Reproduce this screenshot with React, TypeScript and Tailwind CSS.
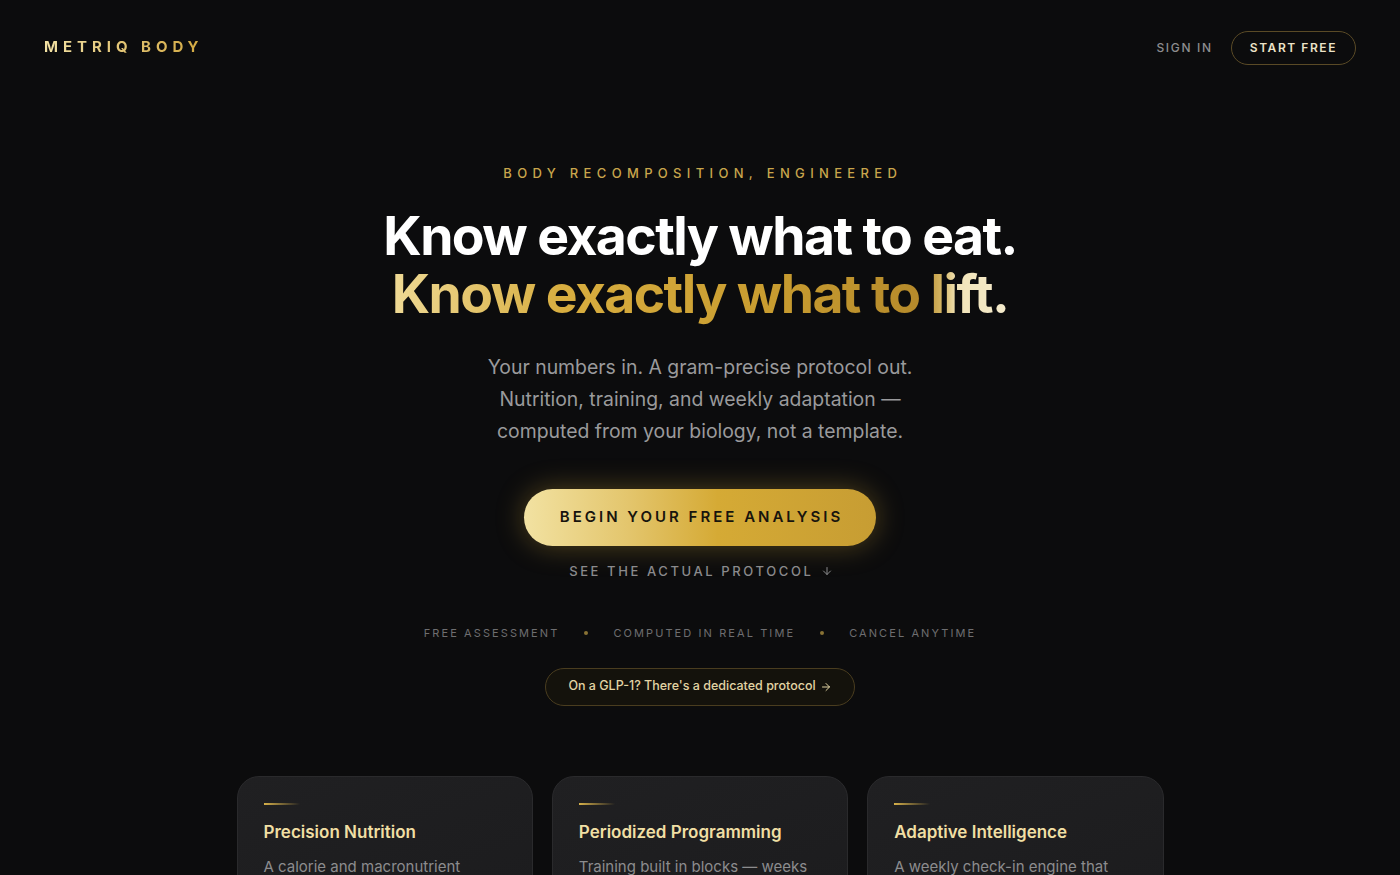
import { ArrowDown, ArrowRight } from 'lucide-react'

const features = [
  {
    title: 'Precision Nutrition',
    body: 'A calorie and macronutrient target set to the gram, built around your lean mass and goal.',
  },
  {
    title: 'Periodized Programming',
    body: 'Training built in blocks — weeks of progressive overload, then a planned deload.',
  },
  {
    title: 'Adaptive Intelligence',
    body: 'A weekly check-in engine that reads your trend and adjusts the protocol for you.',
  },
]

const trust = ['Free assessment', 'Computed in real time', 'Cancel anytime']

export default function App() {
  return (
    <div className="min-h-screen bg-[#0c0c0d] font-['Inter','Noto_Sans',sans-serif] text-white antialiased">
      {/* header */}
      <header className="flex h-[95px] items-center justify-between px-11">
        <span className="bg-gradient-to-r from-[#f3e2a4] to-[#d2a83e] bg-clip-text text-[15px] font-bold tracking-[0.33em] text-transparent">
          METRIQ BODY
        </span>
        <nav className="flex items-center gap-[18px]">
          <a className="text-[12px] font-medium tracking-[0.14em] text-[#8d8d8f]">SIGN IN</a>
          <a className="rounded-full border border-[#5a4a26] px-[18px] py-[7px] text-[12px] font-semibold tracking-[0.13em] text-[#ece3c8]">
            START FREE
          </a>
        </nav>
      </header>

      {/* hero */}
      <section className="flex flex-col items-center pt-[69px] text-center">
        <p className="pl-[0.42em] text-[13px] font-medium tracking-[0.41em] text-[#c9a64c]">
          BODY RECOMPOSITION, ENGINEERED
        </p>
        <h1 className="mt-[23px] text-[53.5px] font-bold leading-[58px] tracking-[-0.03em]">
          <span className="block text-white">Know exactly what to eat.</span>
          <span className="block bg-[linear-gradient(90deg,#f0dc9a_0%,#d8ae40_28%,#c99d30_60%,#b58a2b_85%,#d9bb6a_88.5%,#f2e4b8_90.5%,#f5ecd0_100%)] bg-clip-text pb-1 text-transparent">
            Know exactly what to lift.
          </span>
        </h1>
        <p className="mt-[24px] max-w-[440px] text-[19.4px] leading-[32px] text-[#9a9a9c]">
          Your numbers in. A gram-precise protocol out. Nutrition, training, and weekly adaptation — computed from your biology, not a template.
        </p>

        <button className="mt-[42px] h-[57px] w-[352px] rounded-full bg-[linear-gradient(90deg,#f2e2a2_0%,#e3c56c_30%,#d5aa35_55%,#c79d33_100%)] pl-[0.2em] text-[15px] font-semibold tracking-[0.2em] text-[#17140d] shadow-[0_0_28px_rgba(212,168,58,0.35)]">
          BEGIN YOUR FREE ANALYSIS
        </button>
        <a className="mt-[16px] flex items-center gap-2 pl-[0.2em] text-[13px] font-medium tracking-[0.2em] text-[#8a8a8c]">
          SEE THE ACTUAL PROTOCOL
          <ArrowDown className="h-3 w-3" strokeWidth={2} />
        </a>

        <div className="mt-[44px] flex items-center gap-[25px] text-[11px] tracking-[0.19em] text-[#6e6e70]">
          {trust.map((t, i) => (
            <div key={t} className="flex items-center gap-[25px]">
              {i > 0 && <span className="h-1 w-1 rounded-full bg-[#8a7334]" />}
              <span>{t.toUpperCase()}</span>
            </div>
          ))}
        </div>

        <a className="mt-[26px] flex h-[38px] items-center gap-1 rounded-full border border-[#4a3d1f] bg-[#14120c] px-[22px] text-[12.5px] font-medium text-[#e2d4a4]">
          On a GLP-1? There's a dedicated protocol
          <ArrowRight className="h-3 w-3" strokeWidth={2} />
        </a>
      </section>

      {/* features */}
      <section className="mx-auto mt-[70px] grid w-[927px] grid-cols-3 gap-[19px] pb-16">
        {features.map((f) => (
          <div
            key={f.title}
            className="rounded-[22px] border border-[#2a2a2c] bg-[linear-gradient(160deg,#202022_0%,#1b1b1d_100%)] px-[26px] pt-[26px] pb-8"
          >
            <div className="h-[2px] w-9 bg-gradient-to-r from-[#d6b04a] to-transparent" />
            <h3 className="mt-[15px] text-[17px] font-semibold text-[#f0dfa4]">{f.title}</h3>
            <p className="mt-[9px] text-[15px] leading-[25px] text-[#8c8c8e]">{f.body}</p>
          </div>
        ))}
      </section>
    </div>
  )
}
